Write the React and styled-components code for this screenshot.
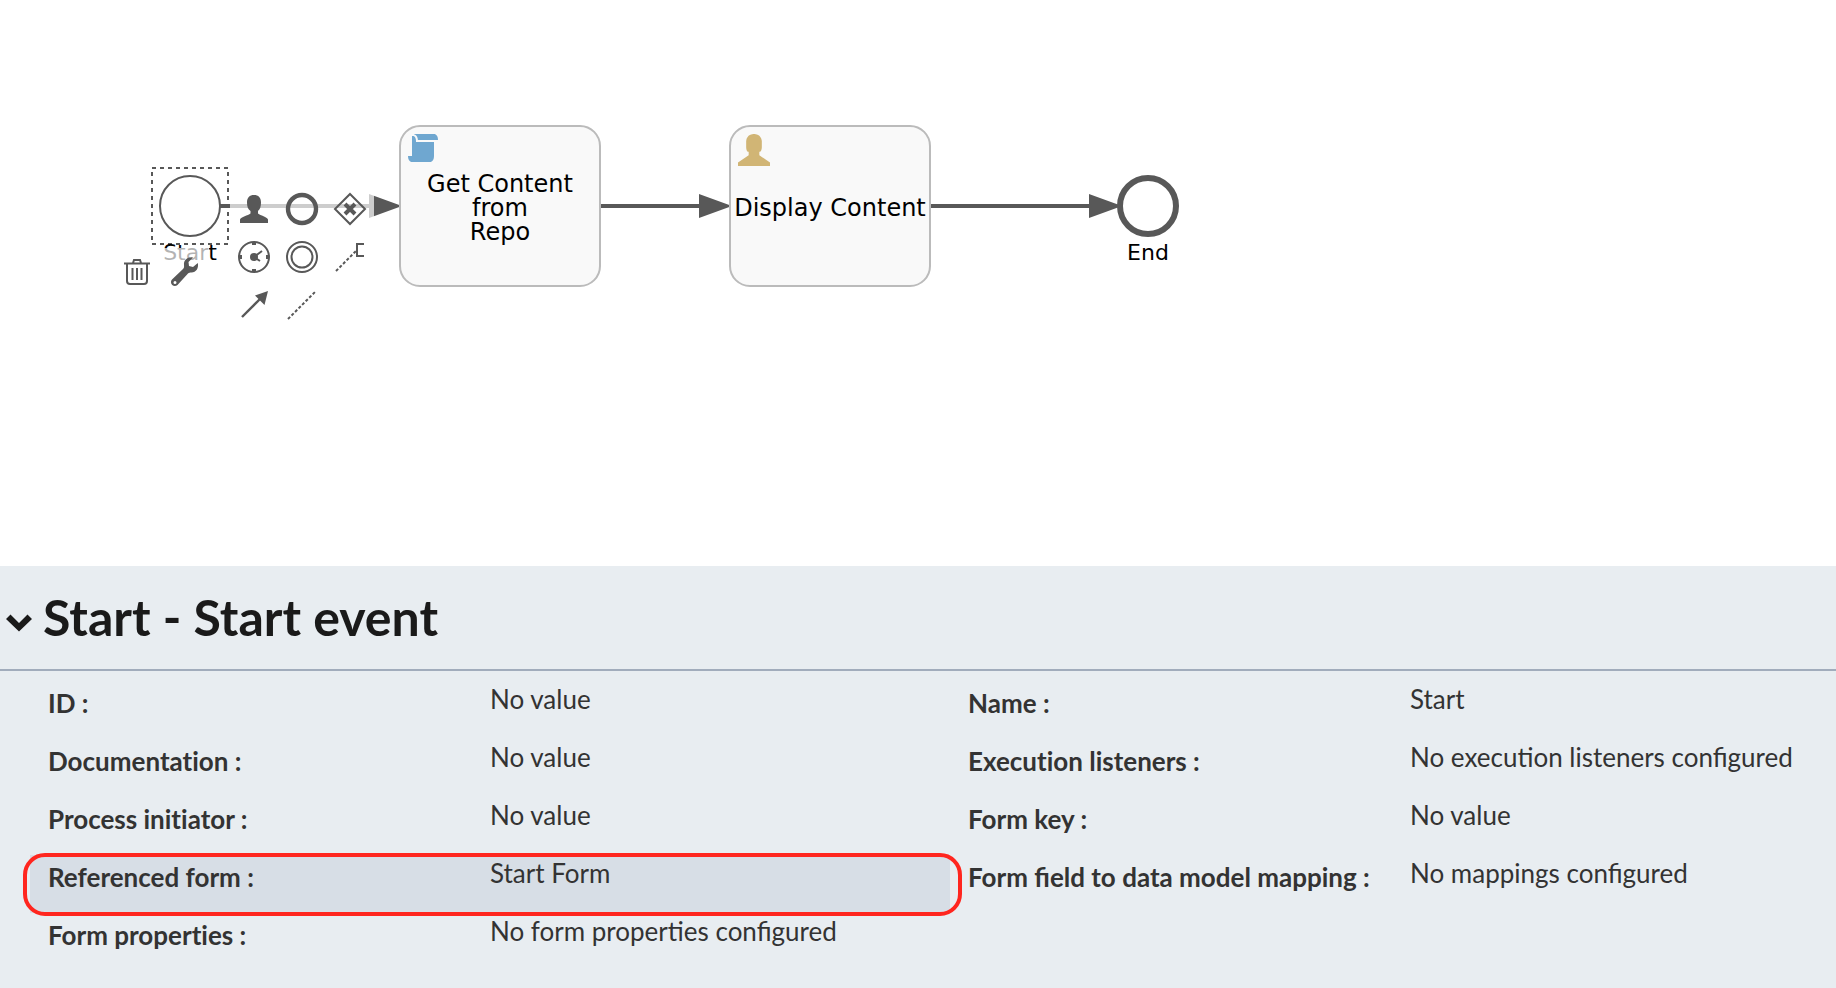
import React, { useState } from 'react';
import styled, { createGlobalStyle, css } from 'styled-components';

const ink = '#585858';

const GlobalStyle = createGlobalStyle`
  *, *::before, *::after { box-sizing: border-box; }
  body {
    margin: 0;
    background: #ffffff;
    color: #333333;
    font-family: Lato, "Liberation Sans", sans-serif;
  }
`;

const Page = styled.div`
  display: flex;
  flex-direction: column;
  min-height: 100vh;
  overflow-x: hidden;
`;

const Canvas = styled.main`
  position: relative;
  flex: 1;
  min-height: 360px;
  overflow: hidden;
  color: #000000;
  font-family: Verdana, "DejaVu Sans", sans-serif;
`;

const Flows = styled.svg`
  position: absolute;
  top: 0;
  left: 0;
  width: 1240px;
  height: 360px;
`;

const Node = styled.div`
  position: absolute;
  left: ${(p) => p.$x}px;
  top: ${(p) => p.$y}px;
`;

const Task = styled(Node)`
  display: flex;
  align-items: center;
  justify-content: center;
  width: 202px;
  height: 162px;
  padding-top: 4px;
  border: 2px solid #bbbbbb;
  border-radius: 21px;
  background: #f9f9f9;
  font-size: 24px;
  line-height: 24px;
  text-align: center;
  white-space: pre-line;
`;

const TaskIcon = styled.svg`
  position: absolute;
  top: 5px;
  left: 5px;
  width: 36px;
  height: 36px;
  fill: ${(p) => p.$fill};
`;

const Event = styled(Node)`
  width: 62px;
  height: 62px;
  border: ${(p) => p.$stroke}px solid ${ink};
  border-radius: 50%;
  background: #ffffff;
`;

const EventLabel = styled(Node)`
  width: 100px;
  font-size: 22px;
  line-height: 26px;
  text-align: center;
`;

const Pad = styled(Node)`
  display: grid;
  grid-template-columns: repeat(${(p) => p.$columns}, 48px);
  grid-auto-rows: 48px;
`;

const PadButton = styled.button`
  display: block;
  padding: 0;
  border: 0;
  background: rgba(255, 255, 255, 0.7);
  cursor: pointer;

  svg {
    display: block;
    width: 48px;
    height: 48px;
    fill: none;
    stroke: ${ink};
    stroke-width: 2;
  }
`;

const Panel = styled.section`
  background: #e8edf1;
`;

const PanelHeader = styled.h2`
  margin: 0;
  padding: 21px 6px 22px;
  border-bottom: 2px solid #a1acbc;
  color: #1a1a1a;
  font-size: 50px;
  line-height: 60px;
`;

const Toggle = styled.button`
  display: flex;
  align-items: center;
  gap: 11px;
  padding: 0;
  border: 0;
  background: none;
  color: inherit;
  font: inherit;
  cursor: pointer;

  svg {
    width: 26px;
    height: 18px;
    margin-top: 12px;
    transform: rotate(${(p) => (p.$open ? 0 : -90)}deg);
  }
`;

const Properties = styled.dl`
  display: grid;
  grid-template-columns: 920fr 886fr;
  margin: 0;
  padding: 10px 0 17px 30px;
  font-size: 26px;
  line-height: 32px;
`;

const Property = styled.div`
  position: relative;
  display: flex;
  min-height: 58px;

  ${(p) =>
    p.$marked &&
    css`
      background: #d7dee6;

      &::after {
        content: '';
        position: absolute;
        inset: -2px -12px -3px -7px;
        border: 4px solid #ff261f;
        border-radius: 22px;
        pointer-events: none;
      }
    `}
`;

const Term = styled.dt`
  flex: 0 0 25vw;
  padding: 6px 0 0 18px;
  font-weight: 700;
  font-variant-ligatures: ${(p) => (p.$ligatures ? 'normal' : 'none')};
`;

const Value = styled.dd`
  margin: 0;
  padding: 2px 0 0 1px;
`;

const properties = [
  { name: 'ID', value: 'No value' },
  { name: 'Name', value: 'Start' },
  { name: 'Documentation', value: 'No value' },
  { name: 'Execution listeners', value: 'No execution listeners configured' },
  { name: 'Process initiator', value: 'No value' },
  { name: 'Form key', value: 'No value' },
  { name: 'Referenced form', value: 'Start Form', marked: true },
  { name: 'Form field to data model mapping', value: 'No mappings configured' },
  { name: 'Form properties', value: 'No form properties configured' },
];

const appendActions = [
  {
    label: 'Append user task',
    icon: (
      <path
        fill={ink}
        stroke="none"
        d="M10 39V35.500C11 33 18 31.500 20.500 29.500V27C18 25.500 17 22.500 17 18.500C17 13.500 19.500 11 24 11C28.500 11 31 13.500 31 18.500C31 22.500 30 25.500 28 27V29.500C30.500 31.500 37 33 38 35.500V39Z"
      />
    ),
  },
  { label: 'Append end event', icon: <circle cx="24" cy="25" r="14" strokeWidth="4.400" /> },
  {
    label: 'Append gateway',
    icon: (
      <>
        <path d="M24 10L39 25L24 40L9 25Z" />
        <path d="M19 20L29 30M29 20L19 30" strokeWidth="4" />
      </>
    ),
  },
  {
    label: 'Append timer event',
    icon: (
      <>
        <circle cx="24" cy="25" r="15" />
        <path d="M24 10V13M24 37V40M9 25H12M36 25H39" strokeWidth="4" />
        <circle cx="24" cy="25" r="4" fill={ink} stroke="none" />
        <path d="M24 25L32 19M24 25L30 29" />
      </>
    ),
  },
  {
    label: 'Append intermediate event',
    icon: (
      <>
        <circle cx="24" cy="25" r="15" />
        <circle cx="24" cy="25" r="10.500" />
      </>
    ),
  },
  {
    label: 'Append annotation',
    icon: (
      <>
        <path d="M10 39L31 18" strokeDasharray="3 2" />
        <path d="M38 12H31V24H38" />
      </>
    ),
  },
  {
    label: 'Connect with sequence flow',
    icon: (
      <>
        <path d="M12 37L32 17" strokeWidth="2.400" />
        <path d="M38 11L25 15.500L34.500 25Z" fill={ink} stroke="none" />
      </>
    ),
  },
  { label: 'Connect with association', icon: <path d="M10 39L38 11" strokeDasharray="3 2" /> },
];

const editActions = [
  {
    label: 'Delete',
    icon: (
      <>
        <path d="M11 15.500H37M20 15L21 12H27L28 15" />
        <path d="M14 16V33Q14 36 17 36H31Q34 36 34 33V16" />
        <path d="M19.500 20V32M24 20V32M28.500 20V32" />
      </>
    ),
  },
  {
    label: 'Change type',
    icon: (
      <path
        fill={ink}
        fillRule="evenodd"
        stroke="none"
        d="M32 9.500C27 8.500 22.500 12 23 17C23.200 19 23 20 22 21L11 31.500C9.500 33 9.700 35.500 11.200 37C12.700 38.400 15 38.400 16.500 37L27 25.500C28 24.500 29 24.500 30.500 24.500C35 24.500 38 20 36.800 15L32 19L28 18L27.500 14ZM14 33A1.500 1.500 0 1 0 14 36A1.500 1.500 0 1 0 14 33Z"
      />
    ),
  },
];

function ContextPad({ x, y, columns, actions }) {
  return (
    <Pad $x={x} $y={y} $columns={columns}>
      {actions.map(({ label, icon }) => (
        <PadButton key={label} type="button" aria-label={label}>
          <svg viewBox="0 0 48 48">{icon}</svg>
        </PadButton>
      ))}
    </Pad>
  );
}

function Diagram() {
  return (
    <Canvas>
      <Flows viewBox="0 0 1240 360" stroke={ink} strokeWidth="4" fill={ink}>
        <path d="M220 206H370M601 206H700M931 206H1090" />
        <path stroke="none" d="M369 194L402 206L369 218ZM699 194L732 206L699 218ZM1089 194L1122 206L1089 218Z" />
        <rect x="152" y="168" width="76" height="76" fill="none" strokeWidth="2" strokeDasharray="4 4" />
      </Flows>

      <Event $x={159} $y={175} $stroke={2} />
      <EventLabel $x={140} $y={240}>Start</EventLabel>

      <Task $x={399} $y={125}>
        <TaskIcon viewBox="0 0 18 18" $fill="#6fa7d0">
          <path d="M4 1v.094c.237.064.532.165.813.375.558.419 1.05 1.228 1.156 2.531H16C16 1 14 1 14 1H4zM3 2v10H1c0 3 2 3 2 3h9s2 0 2-3V5H5v-.5c0-1.389-.44-1.971-.813-2.25C3.815 1.971 3.500 2 3.500 2H3z" />
        </TaskIcon>
        {'Get Content\nfrom\nRepo'}
      </Task>

      <Task $x={729} $y={125}>
        <TaskIcon viewBox="0 0 18 18" $fill="#d1b575">
          <path d="M1 17h16v-1.778l-5.333-3.555V9.889c1.244 0 1.244-2.311 1.244-2.311V4.556C12.556.822 9 1 9 1S5.444.822 5.089 4.556v3.022s0 2.311 1.244 2.311v1.778L1 15.222V17z" />
        </TaskIcon>
        Display Content
      </Task>

      <Event $x={1117} $y={175} $stroke={6} />
      <EventLabel $x={1098} $y={240}>End</EventLabel>

      <ContextPad x={230} y={184} columns={3} actions={appendActions} />
      <ContextPad x={113} y={248} columns={2} actions={editActions} />
    </Canvas>
  );
}

export default function App() {
  const [open, setOpen] = useState(true);

  return (
    <>
      <GlobalStyle />
      <Page>
        <Diagram />
        <Panel>
          <PanelHeader>
            <Toggle type="button" $open={open} aria-expanded={open} onClick={() => setOpen(!open)}>
              <svg viewBox="0 0 26 18" fill="#1a1a1a" aria-hidden="true">
                <path d="M0 5L4.500 0.500L13 9L21.500 0.500L26 5L13 17.500Z" />
              </svg>
              Start - Start event
            </Toggle>
          </PanelHeader>
          {open && (
            <Properties>
              {properties.map(({ name, value, marked }) => (
                <Property key={name} $marked={marked}>
                  <Term $ligatures={name.includes('fi')}>{name} :</Term>
                  <Value>{value}</Value>
                </Property>
              ))}
            </Properties>
          )}
        </Panel>
      </Page>
    </>
  );
}
